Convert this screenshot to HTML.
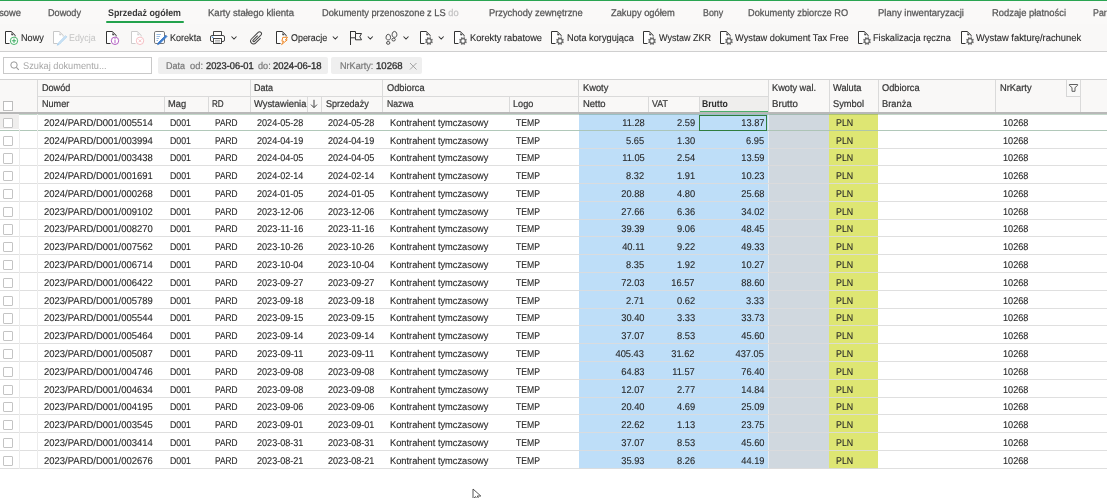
<!DOCTYPE html>
<html><head><meta charset="utf-8"><style>
html,body{margin:0;padding:0;}
body{width:1107px;height:498px;overflow:hidden;position:relative;background:#fff;font-family:"Liberation Sans", sans-serif;}
.t{position:absolute;white-space:nowrap;line-height:1;text-rendering:geometricPrecision;}
body{will-change:transform;}
</style></head><body>
<div style="position:absolute;left:0px;top:1.2px;width:1107px;height:22.8px;background:#faf9f8"></div>
<div style="position:absolute;left:0px;top:23.6px;width:1107px;height:0.8px;background:#f0f0ef"></div>
<div style="position:absolute;left:0px;top:0px;width:1107px;height:1.3px;background:#2aa552"></div>
<div class="t" style="right:1086.00px;top:8.50px;font-size:9.80px;color:#555555;transform:scaleX(0.9500);transform-origin:right;-webkit-text-stroke:0.25px #555;">sowe</div>
<div class="t" style="left:48.00px;top:8.50px;font-size:9.80px;color:#555555;transform:scaleX(0.9317);transform-origin:left;-webkit-text-stroke:0.25px #555;">Dowody</div>
<div class="t" style="left:108.00px;top:8.50px;font-size:9.80px;color:#3a3a3a;font-weight:700;transform:scaleX(0.9057);transform-origin:left;">Sprzedaż ogółem</div>
<div class="t" style="left:207.50px;top:8.50px;font-size:9.80px;color:#555555;transform:scaleX(0.9755);transform-origin:left;-webkit-text-stroke:0.25px #555;">Karty stałego klienta</div>
<div class="t" style="left:321.70px;top:8.50px;font-size:9.80px;color:#555555;transform:scaleX(0.9462);transform-origin:left;-webkit-text-stroke:0.25px #555;">Dokumenty przenoszone z LS <span style='color:#c4c4c4;-webkit-text-stroke:0.25px #c4c4c4'>do</span></div>
<div class="t" style="left:488.60px;top:8.50px;font-size:9.80px;color:#555555;transform:scaleX(0.9503);transform-origin:left;-webkit-text-stroke:0.25px #555;">Przychody zewnętrzne</div>
<div class="t" style="left:610.60px;top:8.50px;font-size:9.80px;color:#555555;transform:scaleX(0.9506);transform-origin:left;-webkit-text-stroke:0.25px #555;">Zakupy ogółem</div>
<div class="t" style="left:702.90px;top:8.50px;font-size:9.80px;color:#555555;transform:scaleX(0.9042);transform-origin:left;-webkit-text-stroke:0.25px #555;">Bony</div>
<div class="t" style="left:748.40px;top:8.50px;font-size:9.80px;color:#555555;transform:scaleX(0.9425);transform-origin:left;-webkit-text-stroke:0.25px #555;">Dokumenty zbiorcze RO</div>
<div class="t" style="left:878.00px;top:8.50px;font-size:9.80px;color:#555555;transform:scaleX(0.9685);transform-origin:left;-webkit-text-stroke:0.25px #555;">Plany inwentaryzacji</div>
<div class="t" style="left:992.00px;top:8.50px;font-size:9.80px;color:#555555;transform:scaleX(0.9566);transform-origin:left;-webkit-text-stroke:0.25px #555;">Rodzaje płatności</div>
<div class="t" style="left:1092.80px;top:8.50px;font-size:9.80px;color:#555555;transform:scaleX(0.9000);transform-origin:left;-webkit-text-stroke:0.25px #555;">Par<span style='opacity:.3'>a</span></div>
<div style="position:absolute;left:106px;top:21px;width:77.6px;height:2.4px;background:#22a24c;border-radius:1px"></div>
<div style="position:absolute;left:0px;top:24.4px;width:1107px;height:26.5px;background:#f9f8f7"></div>
<div style="position:absolute;left:0px;top:50.6px;width:1107px;height:1.2px;background:#cfcfcf"></div>
<div class="t" style="left:20.60px;top:34.10px;font-size:9.80px;color:#2b2b2b;transform:scaleX(0.9300);transform-origin:left;-webkit-text-stroke:0.12px #2b2b2b;">Nowy</div>
<div class="t" style="left:69.40px;top:34.10px;font-size:9.80px;color:#c4c4c4;transform:scaleX(0.9043);transform-origin:left;">Edycja</div>
<div class="t" style="left:169.80px;top:34.10px;font-size:9.80px;color:#2b2b2b;transform:scaleX(0.9236);transform-origin:left;-webkit-text-stroke:0.12px #2b2b2b;">Korekta</div>
<div class="t" style="left:291.30px;top:34.10px;font-size:9.80px;color:#2b2b2b;transform:scaleX(0.9103);transform-origin:left;-webkit-text-stroke:0.12px #2b2b2b;">Operacje</div>
<div class="t" style="left:470.00px;top:34.10px;font-size:9.80px;color:#2b2b2b;transform:scaleX(0.9440);transform-origin:left;-webkit-text-stroke:0.12px #2b2b2b;">Korekty rabatowe</div>
<div class="t" style="left:566.60px;top:34.10px;font-size:9.80px;color:#2b2b2b;transform:scaleX(0.9432);transform-origin:left;-webkit-text-stroke:0.12px #2b2b2b;">Nota korygująca</div>
<div class="t" style="left:658.50px;top:34.10px;font-size:9.80px;color:#2b2b2b;transform:scaleX(0.9196);transform-origin:left;-webkit-text-stroke:0.12px #2b2b2b;">Wystaw ZKR</div>
<div class="t" style="left:735.00px;top:34.10px;font-size:9.80px;color:#2b2b2b;transform:scaleX(0.9432);transform-origin:left;-webkit-text-stroke:0.12px #2b2b2b;">Wystaw dokument Tax Free</div>
<div class="t" style="left:873.20px;top:34.10px;font-size:9.80px;color:#2b2b2b;transform:scaleX(0.9397);transform-origin:left;-webkit-text-stroke:0.12px #2b2b2b;">Fiskalizacja ręczna</div>
<div class="t" style="left:976.00px;top:34.10px;font-size:9.80px;color:#2b2b2b;transform:scaleX(0.9569);transform-origin:left;-webkit-text-stroke:0.12px #2b2b2b;">Wystaw fakturę/rachunek</div>
<svg style="position:absolute;left:0;top:0" width="1107" height="55" viewBox="0 0 1107 55"><path d="M5.5 31.5 V43.5 H9.5" stroke="#333" fill="none"/><path d="M5.5 31.5 H11 L15 35.5 V36.5" stroke="#333" stroke-width="1.15" fill="none"/><path d="M6 32 H11 L14.5 35.5 V43 H6 Z" fill="#fff" stroke="none"/><path d="M11.6 33.6 V35.1 H13.1 Z" fill="#333" stroke="#333" stroke-width="0.5"/><circle cx="14" cy="40.8" r="3.7" fill="#fff" stroke="#2aa552" stroke-width="0.85"/><path d="M14 38.6 V43 M11.8 40.8 H16.2" stroke="#2aa552" stroke-width="0.9"/><path d="M53.5 31.5 V43.5 H57.5" stroke="#c8c8c8" fill="none"/><path d="M53.5 31.5 H59 L63 35.5 V36.5" stroke="#c8c8c8" stroke-width="1.15" fill="none"/><path d="M54 32 H59 L62.5 35.5 V43 H54 Z" fill="#fff" stroke="none"/><path d="M59.6 33.6 V35.1 H61.1 Z" fill="#c8c8c8" stroke="#c8c8c8" stroke-width="0.5"/><path d="M65.6 35.8 L58.2 43.2 L57.3 45.2 L59.3 44.3 L66.7 36.9 Z" fill="#d6e9f8" stroke="#a6cdec" stroke-width="0.9"/><path d="M106.5 31.5 V43.5 H110.5" stroke="#333" fill="none"/><path d="M106.5 31.5 H112 L116 35.5 V36.5" stroke="#333" stroke-width="1.15" fill="none"/><path d="M107 32 H112 L115.5 35.5 V43 H107 Z" fill="#fff" stroke="none"/><path d="M112.6 33.6 V35.1 H114.1 Z" fill="#333" stroke="#333" stroke-width="0.5"/><circle cx="115" cy="40.8" r="3.7" fill="#fff" stroke="#a546b8" stroke-width="0.85"/><path d="M115 39.6 V43.2" stroke="#a546b8" stroke-width="0.85"/><circle cx="115" cy="38.4" r="0.5" fill="#a546b8"/><path d="M131.5 31.5 V43.5 H135.5" stroke="#cccccc" fill="none"/><path d="M131.5 31.5 H137 L141 35.5 V36.5" stroke="#cccccc" stroke-width="1.15" fill="none"/><path d="M132 32 H137 L140.5 35.5 V43 H132 Z" fill="#fff" stroke="none"/><path d="M137.6 33.6 V35.1 H139.1 Z" fill="#cccccc" stroke="#cccccc" stroke-width="0.5"/><circle cx="140" cy="40.8" r="3.7" fill="#fff" stroke="#f4b3b9" stroke-width="0.85"/><path d="M138.6 39.4 L141.4 42.2 M141.4 39.4 L138.6 42.2" stroke="#f4b3b9" stroke-width="0.8"/><rect x="154.5" y="31.5" width="10" height="12" rx="1.3" stroke="#777" fill="#fff"/><path d="M156.5 34.5 H161 M156.5 36.5 H160 M156.5 38.5 H159 M156.5 40.5 H158" stroke="#8fb3de" stroke-width="0.9"/><path d="M167 36.4 L159.6 43.8 L157.6 44.6 L158.4 42.6 L165.8 35.2 Z" fill="#3d7ccb" stroke="#3d7ccb" stroke-width="0.9" stroke-linejoin="round"/><path d="M213.5 35.5 V31.5 H221.5 V35.5" stroke="#3a3a3a" stroke-width="0.95" fill="none"/><rect x="210.5" y="35.5" width="14" height="6" rx="1.5" stroke="#3a3a3a" stroke-width="0.95" fill="#fff"/><rect x="213.5" y="38.5" width="8" height="5" stroke="#3a3a3a" stroke-width="0.95" fill="#fff"/><path d="M215 40.3 H220 M215 42 H220" stroke="#8a8a8a" stroke-width="0.8"/><circle cx="212.7" cy="37.2" r="0.8" fill="#3c8ad8"/><path d="M231.5 36.5 L234 39.0 L236.5 36.5" stroke="#333" stroke-width="1.05" fill="none"/><g transform="translate(256.8 37.8) rotate(45)"><path d="M1.9 -2.5 V4.6 A2.9 2.9 0 0 1 -3.9 4.6 V-4.8 A1.95 1.95 0 0 1 0 -4.8 V4.2 A0.95 0.95 0 0 1 -1.9 4.2 V-2.2" stroke="#444" stroke-width="1" fill="none" transform="translate(1 0)"/></g><path d="M276.5 31.5 V43.5 H280.5" stroke="#333" fill="none"/><path d="M276.5 31.5 H282 L286 35.5 V36.5" stroke="#333" stroke-width="1.15" fill="none"/><path d="M277 32 H282 L285.5 35.5 V43 H277 Z" fill="#fff" stroke="none"/><path d="M282.6 33.6 V35.1 H284.1 Z" fill="#333" stroke="#333" stroke-width="0.5"/><path d="M282.8 37.3 H287.6 L285.4 39.9 H287.2 L281.6 44.6 L283.6 41.2 H281.9 Z" fill="#fff" stroke="#ef8a2a" stroke-width="1" stroke-linejoin="round"/><path d="M332.8 36.5 L335.3 39.0 L337.8 36.5" stroke="#333" stroke-width="1.05" fill="none"/><path d="M350.5 31 V45" stroke="#333" fill="none"/><path d="M350.5 31.5 H355.5 V33.5 H361.5 L359.8 36.7 L361.5 39.8 H355.5 V37.8 H350.5" stroke="#333" fill="none"/><path d="M355.5 33.5 V37.8" stroke="#333" fill="none"/><path d="M367.8 36.5 L370.3 39.0 L372.8 36.5" stroke="#333" stroke-width="1.05" fill="none"/><path d="M388.3 34.3 C390.3 34.3 390.9 37.2 390.4 38.6 C390.1 39.6 389.3 39.9 388.3 39.9 C387.3 39.9 386.5 39.6 386.2 38.6 C385.7 37.2 386.3 34.3 388.3 34.3 Z" stroke="#444" stroke-width="0.95" fill="none"/><ellipse cx="388.2" cy="42.9" rx="1.7" ry="1.4" stroke="#444" stroke-width="0.95" fill="none"/><path d="M394.5 31.4 C396.6 31.4 397.2 34.5 396.7 35.9 C396.4 36.9 395.6 37.3 394.5 37.3 C393.4 37.3 392.6 36.9 392.3 35.9 C391.8 34.5 392.4 31.4 394.5 31.4 Z" stroke="#444" stroke-width="0.95" fill="none"/><ellipse cx="393.6" cy="39.6" rx="1.7" ry="1.4" stroke="#444" stroke-width="0.95" fill="none"/><path d="M403.5 36.5 L406 39.0 L408.5 36.5" stroke="#333" stroke-width="1.05" fill="none"/><path d="M420.5 31.5 V43.5 H424.5" stroke="#333" fill="none"/><path d="M420.5 31.5 H426 L430 35.5 V36.5" stroke="#333" stroke-width="1.15" fill="none"/><path d="M421 32 H426 L429.5 35.5 V43 H421 Z" fill="#fff" stroke="none"/><path d="M426.6 33.6 V35.1 H428.1 Z" fill="#333" stroke="#333" stroke-width="0.5"/><circle cx="429" cy="41" r="3.2" fill="#fff"/><path d="M431.22 41.92 L432.60 42.49 M429.92 43.22 L430.49 44.60 M428.08 43.22 L427.51 44.60 M426.78 41.92 L425.40 42.49 M426.78 40.08 L425.40 39.51 M428.08 38.78 L427.51 37.40 M429.92 38.78 L430.49 37.40 M431.22 40.08 L432.60 39.51" stroke="#666" stroke-width="1.5"/><circle cx="429" cy="41" r="2.3" fill="#fff" stroke="#666" stroke-width="1.2"/><path d="M438.7 36.5 L441.2 39.0 L443.7 36.5" stroke="#333" stroke-width="1.05" fill="none"/><path d="M454.5 31.5 V43.5 H458.5" stroke="#333" fill="none"/><path d="M454.5 31.5 H460 L464 35.5 V36.5" stroke="#333" stroke-width="1.15" fill="none"/><path d="M455 32 H460 L463.5 35.5 V43 H455 Z" fill="#fff" stroke="none"/><path d="M460.6 33.6 V35.1 H462.1 Z" fill="#333" stroke="#333" stroke-width="0.5"/><circle cx="463" cy="41" r="3.2" fill="#fff"/><path d="M465.22 41.92 L466.60 42.49 M463.92 43.22 L464.49 44.60 M462.08 43.22 L461.51 44.60 M460.78 41.92 L459.40 42.49 M460.78 40.08 L459.40 39.51 M462.08 38.78 L461.51 37.40 M463.92 38.78 L464.49 37.40 M465.22 40.08 L466.60 39.51" stroke="#666" stroke-width="1.5"/><circle cx="463" cy="41" r="2.3" fill="#fff" stroke="#666" stroke-width="1.2"/><path d="M551.5 31.5 V43.5 H555.5" stroke="#333" fill="none"/><path d="M551.5 31.5 H557 L561 35.5 V36.5" stroke="#333" stroke-width="1.15" fill="none"/><path d="M552 32 H557 L560.5 35.5 V43 H552 Z" fill="#fff" stroke="none"/><path d="M557.6 33.6 V35.1 H559.1 Z" fill="#333" stroke="#333" stroke-width="0.5"/><circle cx="560" cy="41" r="3.2" fill="#fff"/><path d="M562.22 41.92 L563.60 42.49 M560.92 43.22 L561.49 44.60 M559.08 43.22 L558.51 44.60 M557.78 41.92 L556.40 42.49 M557.78 40.08 L556.40 39.51 M559.08 38.78 L558.51 37.40 M560.92 38.78 L561.49 37.40 M562.22 40.08 L563.60 39.51" stroke="#666" stroke-width="1.5"/><circle cx="560" cy="41" r="2.3" fill="#fff" stroke="#666" stroke-width="1.2"/><path d="M643.5 31.5 V43.5 H647.5" stroke="#333" fill="none"/><path d="M643.5 31.5 H649 L653 35.5 V36.5" stroke="#333" stroke-width="1.15" fill="none"/><path d="M644 32 H649 L652.5 35.5 V43 H644 Z" fill="#fff" stroke="none"/><path d="M649.6 33.6 V35.1 H651.1 Z" fill="#333" stroke="#333" stroke-width="0.5"/><circle cx="652" cy="41" r="3.2" fill="#fff"/><path d="M654.22 41.92 L655.60 42.49 M652.92 43.22 L653.49 44.60 M651.08 43.22 L650.51 44.60 M649.78 41.92 L648.40 42.49 M649.78 40.08 L648.40 39.51 M651.08 38.78 L650.51 37.40 M652.92 38.78 L653.49 37.40 M654.22 40.08 L655.60 39.51" stroke="#666" stroke-width="1.5"/><circle cx="652" cy="41" r="2.3" fill="#fff" stroke="#666" stroke-width="1.2"/><path d="M720.5 31.5 V43.5 H724.5" stroke="#333" fill="none"/><path d="M720.5 31.5 H726 L730 35.5 V36.5" stroke="#333" stroke-width="1.15" fill="none"/><path d="M721 32 H726 L729.5 35.5 V43 H721 Z" fill="#fff" stroke="none"/><path d="M726.6 33.6 V35.1 H728.1 Z" fill="#333" stroke="#333" stroke-width="0.5"/><circle cx="729" cy="41" r="3.2" fill="#fff"/><path d="M731.22 41.92 L732.60 42.49 M729.92 43.22 L730.49 44.60 M728.08 43.22 L727.51 44.60 M726.78 41.92 L725.40 42.49 M726.78 40.08 L725.40 39.51 M728.08 38.78 L727.51 37.40 M729.92 38.78 L730.49 37.40 M731.22 40.08 L732.60 39.51" stroke="#666" stroke-width="1.5"/><circle cx="729" cy="41" r="2.3" fill="#fff" stroke="#666" stroke-width="1.2"/><path d="M858.5 31.5 V43.5 H862.5" stroke="#333" fill="none"/><path d="M858.5 31.5 H864 L868 35.5 V36.5" stroke="#333" stroke-width="1.15" fill="none"/><path d="M859 32 H864 L867.5 35.5 V43 H859 Z" fill="#fff" stroke="none"/><path d="M864.6 33.6 V35.1 H866.1 Z" fill="#333" stroke="#333" stroke-width="0.5"/><circle cx="867" cy="41" r="3.2" fill="#fff"/><path d="M869.22 41.92 L870.60 42.49 M867.92 43.22 L868.49 44.60 M866.08 43.22 L865.51 44.60 M864.78 41.92 L863.40 42.49 M864.78 40.08 L863.40 39.51 M866.08 38.78 L865.51 37.40 M867.92 38.78 L868.49 37.40 M869.22 40.08 L870.60 39.51" stroke="#666" stroke-width="1.5"/><circle cx="867" cy="41" r="2.3" fill="#fff" stroke="#666" stroke-width="1.2"/><path d="M961.5 31.5 V43.5 H965.5" stroke="#333" fill="none"/><path d="M961.5 31.5 H967 L971 35.5 V36.5" stroke="#333" stroke-width="1.15" fill="none"/><path d="M962 32 H967 L970.5 35.5 V43 H962 Z" fill="#fff" stroke="none"/><path d="M967.6 33.6 V35.1 H969.1 Z" fill="#333" stroke="#333" stroke-width="0.5"/><circle cx="970" cy="41" r="3.2" fill="#fff"/><path d="M972.22 41.92 L973.60 42.49 M970.92 43.22 L971.49 44.60 M969.08 43.22 L968.51 44.60 M967.78 41.92 L966.40 42.49 M967.78 40.08 L966.40 39.51 M969.08 38.78 L968.51 37.40 M970.92 38.78 L971.49 37.40 M972.22 40.08 L973.60 39.51" stroke="#666" stroke-width="1.5"/><circle cx="970" cy="41" r="2.3" fill="#fff" stroke="#666" stroke-width="1.2"/></svg>
<div style="position:absolute;left:3.2px;top:57.2px;width:148.5px;height:16.4px;box-sizing:border-box;border:1px solid #c9c9c9;background:#fff"></div>
<svg style="position:absolute;left:10px;top:61px;overflow:visible" width="10" height="10" viewBox="0 0 10 10" fill="none"><circle cx="4" cy="4" r="3.2" stroke="#999" stroke-width="1"/><path d="M6.4 6.4 L8.8 8.8" stroke="#999" stroke-width="1.1"/></svg>
<div class="t" style="left:23.40px;top:61.50px;font-size:9.80px;color:#a8a8a8;transform:scaleX(0.9415);transform-origin:left;">Szukaj dokumentu...</div>
<div style="position:absolute;left:158.3px;top:57px;width:169.5px;height:16.5px;background:#efefef;border-radius:2px"></div>
<div class="t" style="left:166.40px;top:61.50px;font-size:9.80px;color:#777;transform:scaleX(0.9178);transform-origin:left;-webkit-text-stroke:0.2px #777;">Data</div>
<div class="t" style="left:190.00px;top:61.50px;font-size:9.80px;color:#777;transform:scaleX(0.9539);transform-origin:left;-webkit-text-stroke:0.2px #777;">od:</div>
<div class="t" style="left:205.60px;top:61.50px;font-size:9.80px;color:#333;transform:scaleX(0.9495);transform-origin:left;-webkit-text-stroke:0.35px #333;">2023-06-01</div>
<div class="t" style="left:258.20px;top:61.50px;font-size:9.80px;color:#777;transform:scaleX(0.9319);transform-origin:left;-webkit-text-stroke:0.2px #777;">do:</div>
<div class="t" style="left:273.40px;top:61.50px;font-size:9.80px;color:#333;transform:scaleX(0.9694);transform-origin:left;-webkit-text-stroke:0.35px #333;">2024-06-18</div>
<div style="position:absolute;left:331.3px;top:57px;width:90.6px;height:16.5px;background:#efefef;border-radius:2px"></div>
<div class="t" style="left:339.70px;top:61.50px;font-size:9.80px;color:#777;transform:scaleX(0.9266);transform-origin:left;-webkit-text-stroke:0.2px #777;">NrKarty:</div>
<div class="t" style="left:375.80px;top:61.50px;font-size:9.80px;color:#333;transform:scaleX(0.9759);transform-origin:left;-webkit-text-stroke:0.35px #333;">10268</div>
<svg style="position:absolute;left:408.5px;top:61.5px;overflow:visible" width="9" height="9" viewBox="0 0 9 9" fill="none"><path d="M1 1 L7.5 7.5 M7.5 1 L1 7.5" stroke="#999" stroke-width="0.9"/></svg>
<div style="position:absolute;left:0px;top:79px;width:1107px;height:33.5px;background:#f9f8f7"></div>
<div style="position:absolute;left:0px;top:78.6px;width:1107px;height:1.2px;background:#d2d2d2"></div>
<div style="position:absolute;left:37px;top:79.5px;width:1px;height:33px;background:#dadada"></div>
<div style="position:absolute;left:578px;top:79.5px;width:1px;height:33px;background:#dadada"></div>
<div style="position:absolute;left:768px;top:79.5px;width:1px;height:33px;background:#dadada"></div>
<div style="position:absolute;left:829px;top:79.5px;width:1px;height:33px;background:#dadada"></div>
<div style="position:absolute;left:878px;top:79.5px;width:1px;height:33px;background:#dadada"></div>
<div style="position:absolute;left:995px;top:79.5px;width:1px;height:33px;background:#dadada"></div>
<div style="position:absolute;left:1080px;top:79.5px;width:1px;height:33px;background:#dadada"></div>
<div style="position:absolute;left:164px;top:96.5px;width:1px;height:16px;background:#dadada"></div>
<div style="position:absolute;left:208px;top:96.5px;width:1px;height:16px;background:#dadada"></div>
<div style="position:absolute;left:307px;top:96.5px;width:1px;height:16px;background:#dadada"></div>
<div style="position:absolute;left:321px;top:96.5px;width:1px;height:16px;background:#dadada"></div>
<div style="position:absolute;left:509px;top:96.5px;width:1px;height:16px;background:#dadada"></div>
<div style="position:absolute;left:648px;top:96.5px;width:1px;height:16px;background:#dadada"></div>
<div style="position:absolute;left:699px;top:96.5px;width:1px;height:16px;background:#dadada"></div>
<div style="position:absolute;left:250px;top:79.5px;width:1px;height:33px;background:#dadada"></div>
<div style="position:absolute;left:382px;top:79.5px;width:1px;height:33px;background:#dadada"></div>
<div style="position:absolute;left:37px;top:96px;width:731.3px;height:1px;background:#dadada"></div>
<div style="position:absolute;left:699.8px;top:96.8px;width:68.5px;height:15.5px;background:#efeeed"></div>
<div style="position:absolute;left:699.8px;top:110.6px;width:68.5px;height:1.8px;background:#4caf6a"></div>
<div style="position:absolute;left:3.2px;top:101.3px;width:9.6px;height:9.6px;box-sizing:border-box;border:1px solid #bdbdbd;background:#fff"></div>
<div class="t" style="left:41.90px;top:84.20px;font-size:9.80px;color:#353535;transform:scaleX(0.9273);transform-origin:left;-webkit-text-stroke:0.22px #353535;">Dowód</div>
<div class="t" style="left:254.20px;top:84.20px;font-size:9.80px;color:#353535;transform:scaleX(0.9178);transform-origin:left;-webkit-text-stroke:0.22px #353535;">Data</div>
<div class="t" style="left:386.90px;top:84.20px;font-size:9.80px;color:#353535;transform:scaleX(0.9455);transform-origin:left;-webkit-text-stroke:0.22px #353535;">Odbiorca</div>
<div class="t" style="left:582.60px;top:84.20px;font-size:9.80px;color:#353535;transform:scaleX(0.9479);transform-origin:left;-webkit-text-stroke:0.22px #353535;">Kwoty</div>
<div class="t" style="left:772.20px;top:84.20px;font-size:9.80px;color:#353535;transform:scaleX(0.9393);transform-origin:left;-webkit-text-stroke:0.22px #353535;">Kwoty wal.</div>
<div class="t" style="left:833.00px;top:84.20px;font-size:9.80px;color:#353535;transform:scaleX(0.9453);transform-origin:left;-webkit-text-stroke:0.22px #353535;">Waluta</div>
<div class="t" style="left:881.70px;top:84.20px;font-size:9.80px;color:#353535;transform:scaleX(0.9455);transform-origin:left;-webkit-text-stroke:0.22px #353535;">Odbiorca</div>
<div class="t" style="left:999.70px;top:84.20px;font-size:9.80px;color:#353535;transform:scaleX(0.9510);transform-origin:left;-webkit-text-stroke:0.22px #353535;">NrKarty</div>
<div class="t" style="left:41.90px;top:100.20px;font-size:9.80px;color:#353535;transform:scaleX(0.9281);transform-origin:left;-webkit-text-stroke:0.22px #353535;">Numer</div>
<div class="t" style="left:167.60px;top:100.20px;font-size:9.80px;color:#353535;transform:scaleX(0.9494);transform-origin:left;-webkit-text-stroke:0.22px #353535;">Mag</div>
<div class="t" style="left:211.90px;top:100.20px;font-size:9.80px;color:#353535;transform:scaleX(0.8260);transform-origin:left;-webkit-text-stroke:0.22px #353535;">RD</div>
<div class="t" style="left:254.20px;top:100.20px;font-size:9.80px;color:#353535;transform:scaleX(0.9540);transform-origin:left;-webkit-text-stroke:0.22px #353535;">Wystawienia</div>
<svg style="position:absolute;left:310px;top:99px;overflow:visible" width="8" height="10" viewBox="0 0 8 10" fill="none"><path d="M4 0.8 V8.6 M1 5.6 L4 8.6 L7 5.6" stroke="#444" stroke-width="1"/></svg>
<div class="t" style="left:325.50px;top:100.20px;font-size:9.80px;color:#353535;transform:scaleX(0.9221);transform-origin:left;-webkit-text-stroke:0.22px #353535;">Sprzedaży</div>
<div class="t" style="left:386.90px;top:100.20px;font-size:9.80px;color:#353535;transform:scaleX(0.8843);transform-origin:left;-webkit-text-stroke:0.22px #353535;">Nazwa</div>
<div class="t" style="left:513.40px;top:100.20px;font-size:9.80px;color:#353535;transform:scaleX(0.9310);transform-origin:left;-webkit-text-stroke:0.22px #353535;">Logo</div>
<div class="t" style="left:582.60px;top:100.20px;font-size:9.80px;color:#353535;transform:scaleX(0.9647);transform-origin:left;-webkit-text-stroke:0.22px #353535;">Netto</div>
<div class="t" style="left:652.00px;top:100.20px;font-size:9.80px;color:#353535;transform:scaleX(0.9029);transform-origin:left;-webkit-text-stroke:0.22px #353535;">VAT</div>
<div class="t" style="left:702.30px;top:100.20px;font-size:9.80px;color:#2b2b2b;font-weight:700;transform:scaleX(0.8810);transform-origin:left;">Brutto</div>
<div class="t" style="left:772.20px;top:100.20px;font-size:9.80px;color:#353535;transform:scaleX(0.9903);transform-origin:left;-webkit-text-stroke:0.22px #353535;">Brutto</div>
<div class="t" style="left:833.00px;top:100.20px;font-size:9.80px;color:#353535;transform:scaleX(0.9482);transform-origin:left;-webkit-text-stroke:0.22px #353535;">Symbol</div>
<div class="t" style="left:881.70px;top:100.20px;font-size:9.80px;color:#353535;transform:scaleX(0.9532);transform-origin:left;-webkit-text-stroke:0.22px #353535;">Branża</div>
<div style="position:absolute;left:1066.3px;top:79.8px;width:14.2px;height:16.8px;box-sizing:border-box;border-left:1px solid #d6d6d6;border-bottom:1px solid #d6d6d6;background:#f9f9f8"></div>
<svg style="position:absolute;left:1066px;top:82px;overflow:visible" width="14" height="12" viewBox="0 0 14 12" fill="none"><path d="M3.4 2.5 H11.6 V3.4 L9 5.6 V9.3 H6 V5.6 L3.4 3.4 Z" stroke="#555" stroke-width="0.95" stroke-linejoin="round"/></svg>
<div style="position:absolute;left:578.9px;top:113.6px;width:189.4px;height:355.0200000000001px;background:#bedef8"></div>
<div style="position:absolute;left:768.3px;top:113.6px;width:1px;height:355.0200000000001px;background:#e6eaee"></div>
<div style="position:absolute;left:769.3px;top:113.6px;width:60.1px;height:355.0200000000001px;background:#d0d8df"></div>
<div style="position:absolute;left:829.4px;top:113.6px;width:48.8px;height:355.0200000000001px;background:#dee673"></div>
<div style="position:absolute;left:0px;top:112.4px;width:1107px;height:1.2px;background:#b8b8b8"></div>
<div style="position:absolute;left:0px;top:113.6px;width:1107px;height:1.1px;background:rgba(70,130,90,0.32)"></div>
<div style="position:absolute;left:0px;top:113.6px;width:19px;height:15.5px;background:#efeeed"></div>
<div style="position:absolute;left:0px;top:129.8px;width:1107px;height:1px;background:#a9c2b1;opacity:0.9"></div>
<div style="position:absolute;left:2.8px;top:117.8px;width:10.2px;height:10.2px;box-sizing:border-box;border:1px solid #c4c4c4;background:#fff;border-radius:1px"></div>
<div class="t" style="left:44.30px;top:118.80px;font-size:9.80px;color:#262626;transform:scaleX(0.9671);transform-origin:left;-webkit-text-stroke:0.1px #262626;">2024/PARD/D001/005514</div>
<div class="t" style="left:170.20px;top:118.80px;font-size:9.80px;color:#262626;transform:scaleX(0.8964);transform-origin:left;-webkit-text-stroke:0.1px #262626;">D001</div>
<div class="t" style="left:214.50px;top:118.80px;font-size:9.80px;color:#262626;transform:scaleX(0.8489);transform-origin:left;-webkit-text-stroke:0.1px #262626;">PARD</div>
<div class="t" style="left:256.90px;top:118.80px;font-size:9.80px;color:#262626;transform:scaleX(0.9255);transform-origin:left;-webkit-text-stroke:0.1px #262626;">2024-05-28</div>
<div class="t" style="left:327.90px;top:118.80px;font-size:9.80px;color:#262626;transform:scaleX(0.9255);transform-origin:left;-webkit-text-stroke:0.1px #262626;">2024-05-28</div>
<div class="t" style="left:390.00px;top:118.80px;font-size:9.80px;color:#262626;transform:scaleX(0.9457);transform-origin:left;-webkit-text-stroke:0.1px #262626;">Kontrahent tymczasowy</div>
<div class="t" style="left:515.90px;top:118.80px;font-size:9.80px;color:#262626;transform:scaleX(0.8815);transform-origin:left;-webkit-text-stroke:0.1px #262626;">TEMP</div>
<div class="t" style="right:462.60px;top:118.80px;font-size:9.80px;color:#262626;transform:scaleX(0.9500);transform-origin:right;-webkit-text-stroke:0.1px #262626;">11.28</div>
<div class="t" style="right:412.00px;top:118.80px;font-size:9.80px;color:#262626;transform:scaleX(0.9500);transform-origin:right;-webkit-text-stroke:0.1px #262626;">2.59</div>
<div class="t" style="right:342.80px;top:118.80px;font-size:9.80px;color:#262626;transform:scaleX(0.9500);transform-origin:right;-webkit-text-stroke:0.1px #262626;">13.87</div>
<div class="t" style="left:836.00px;top:118.80px;font-size:9.80px;color:#262626;transform:scaleX(0.9022);transform-origin:left;-webkit-text-stroke:0.1px #262626;">PLN</div>
<div class="t" style="left:1002.80px;top:118.80px;font-size:9.80px;color:#262626;transform:scaleX(0.9319);transform-origin:left;-webkit-text-stroke:0.1px #262626;">10268</div>
<div style="position:absolute;left:0px;top:147.58px;width:1107px;height:1px;background:#dcdcdc;opacity:0.9"></div>
<div style="position:absolute;left:2.8px;top:135.57999999999998px;width:10.2px;height:10.2px;box-sizing:border-box;border:1px solid #c4c4c4;background:#fff;border-radius:1px"></div>
<div class="t" style="left:44.30px;top:136.58px;font-size:9.80px;color:#262626;transform:scaleX(0.9671);transform-origin:left;-webkit-text-stroke:0.1px #262626;">2024/PARD/D001/003994</div>
<div class="t" style="left:170.20px;top:136.58px;font-size:9.80px;color:#262626;transform:scaleX(0.8964);transform-origin:left;-webkit-text-stroke:0.1px #262626;">D001</div>
<div class="t" style="left:214.50px;top:136.58px;font-size:9.80px;color:#262626;transform:scaleX(0.8489);transform-origin:left;-webkit-text-stroke:0.1px #262626;">PARD</div>
<div class="t" style="left:256.90px;top:136.58px;font-size:9.80px;color:#262626;transform:scaleX(0.9255);transform-origin:left;-webkit-text-stroke:0.1px #262626;">2024-04-19</div>
<div class="t" style="left:327.90px;top:136.58px;font-size:9.80px;color:#262626;transform:scaleX(0.9255);transform-origin:left;-webkit-text-stroke:0.1px #262626;">2024-04-19</div>
<div class="t" style="left:390.00px;top:136.58px;font-size:9.80px;color:#262626;transform:scaleX(0.9457);transform-origin:left;-webkit-text-stroke:0.1px #262626;">Kontrahent tymczasowy</div>
<div class="t" style="left:515.90px;top:136.58px;font-size:9.80px;color:#262626;transform:scaleX(0.8815);transform-origin:left;-webkit-text-stroke:0.1px #262626;">TEMP</div>
<div class="t" style="right:462.60px;top:136.58px;font-size:9.80px;color:#262626;transform:scaleX(0.9500);transform-origin:right;-webkit-text-stroke:0.1px #262626;">5.65</div>
<div class="t" style="right:412.00px;top:136.58px;font-size:9.80px;color:#262626;transform:scaleX(0.9500);transform-origin:right;-webkit-text-stroke:0.1px #262626;">1.30</div>
<div class="t" style="right:342.80px;top:136.58px;font-size:9.80px;color:#262626;transform:scaleX(0.9500);transform-origin:right;-webkit-text-stroke:0.1px #262626;">6.95</div>
<div class="t" style="left:836.00px;top:136.58px;font-size:9.80px;color:#262626;transform:scaleX(0.9022);transform-origin:left;-webkit-text-stroke:0.1px #262626;">PLN</div>
<div class="t" style="left:1002.80px;top:136.58px;font-size:9.80px;color:#262626;transform:scaleX(0.9319);transform-origin:left;-webkit-text-stroke:0.1px #262626;">10268</div>
<div style="position:absolute;left:0px;top:165.36px;width:1107px;height:1px;background:#dcdcdc;opacity:0.9"></div>
<div style="position:absolute;left:2.8px;top:153.36px;width:10.2px;height:10.2px;box-sizing:border-box;border:1px solid #c4c4c4;background:#fff;border-radius:1px"></div>
<div class="t" style="left:44.30px;top:154.36px;font-size:9.80px;color:#262626;transform:scaleX(0.9671);transform-origin:left;-webkit-text-stroke:0.1px #262626;">2024/PARD/D001/003438</div>
<div class="t" style="left:170.20px;top:154.36px;font-size:9.80px;color:#262626;transform:scaleX(0.8964);transform-origin:left;-webkit-text-stroke:0.1px #262626;">D001</div>
<div class="t" style="left:214.50px;top:154.36px;font-size:9.80px;color:#262626;transform:scaleX(0.8489);transform-origin:left;-webkit-text-stroke:0.1px #262626;">PARD</div>
<div class="t" style="left:256.90px;top:154.36px;font-size:9.80px;color:#262626;transform:scaleX(0.9255);transform-origin:left;-webkit-text-stroke:0.1px #262626;">2024-04-05</div>
<div class="t" style="left:327.90px;top:154.36px;font-size:9.80px;color:#262626;transform:scaleX(0.9255);transform-origin:left;-webkit-text-stroke:0.1px #262626;">2024-04-05</div>
<div class="t" style="left:390.00px;top:154.36px;font-size:9.80px;color:#262626;transform:scaleX(0.9457);transform-origin:left;-webkit-text-stroke:0.1px #262626;">Kontrahent tymczasowy</div>
<div class="t" style="left:515.90px;top:154.36px;font-size:9.80px;color:#262626;transform:scaleX(0.8815);transform-origin:left;-webkit-text-stroke:0.1px #262626;">TEMP</div>
<div class="t" style="right:462.60px;top:154.36px;font-size:9.80px;color:#262626;transform:scaleX(0.9500);transform-origin:right;-webkit-text-stroke:0.1px #262626;">11.05</div>
<div class="t" style="right:412.00px;top:154.36px;font-size:9.80px;color:#262626;transform:scaleX(0.9500);transform-origin:right;-webkit-text-stroke:0.1px #262626;">2.54</div>
<div class="t" style="right:342.80px;top:154.36px;font-size:9.80px;color:#262626;transform:scaleX(0.9500);transform-origin:right;-webkit-text-stroke:0.1px #262626;">13.59</div>
<div class="t" style="left:836.00px;top:154.36px;font-size:9.80px;color:#262626;transform:scaleX(0.9022);transform-origin:left;-webkit-text-stroke:0.1px #262626;">PLN</div>
<div class="t" style="left:1002.80px;top:154.36px;font-size:9.80px;color:#262626;transform:scaleX(0.9319);transform-origin:left;-webkit-text-stroke:0.1px #262626;">10268</div>
<div style="position:absolute;left:0px;top:183.14000000000001px;width:1107px;height:1px;background:#dcdcdc;opacity:0.9"></div>
<div style="position:absolute;left:2.8px;top:171.14px;width:10.2px;height:10.2px;box-sizing:border-box;border:1px solid #c4c4c4;background:#fff;border-radius:1px"></div>
<div class="t" style="left:44.30px;top:172.14px;font-size:9.80px;color:#262626;transform:scaleX(0.9671);transform-origin:left;-webkit-text-stroke:0.1px #262626;">2024/PARD/D001/001691</div>
<div class="t" style="left:170.20px;top:172.14px;font-size:9.80px;color:#262626;transform:scaleX(0.8964);transform-origin:left;-webkit-text-stroke:0.1px #262626;">D001</div>
<div class="t" style="left:214.50px;top:172.14px;font-size:9.80px;color:#262626;transform:scaleX(0.8489);transform-origin:left;-webkit-text-stroke:0.1px #262626;">PARD</div>
<div class="t" style="left:256.90px;top:172.14px;font-size:9.80px;color:#262626;transform:scaleX(0.9255);transform-origin:left;-webkit-text-stroke:0.1px #262626;">2024-02-14</div>
<div class="t" style="left:327.90px;top:172.14px;font-size:9.80px;color:#262626;transform:scaleX(0.9255);transform-origin:left;-webkit-text-stroke:0.1px #262626;">2024-02-14</div>
<div class="t" style="left:390.00px;top:172.14px;font-size:9.80px;color:#262626;transform:scaleX(0.9457);transform-origin:left;-webkit-text-stroke:0.1px #262626;">Kontrahent tymczasowy</div>
<div class="t" style="left:515.90px;top:172.14px;font-size:9.80px;color:#262626;transform:scaleX(0.8815);transform-origin:left;-webkit-text-stroke:0.1px #262626;">TEMP</div>
<div class="t" style="right:462.60px;top:172.14px;font-size:9.80px;color:#262626;transform:scaleX(0.9500);transform-origin:right;-webkit-text-stroke:0.1px #262626;">8.32</div>
<div class="t" style="right:412.00px;top:172.14px;font-size:9.80px;color:#262626;transform:scaleX(0.9500);transform-origin:right;-webkit-text-stroke:0.1px #262626;">1.91</div>
<div class="t" style="right:342.80px;top:172.14px;font-size:9.80px;color:#262626;transform:scaleX(0.9500);transform-origin:right;-webkit-text-stroke:0.1px #262626;">10.23</div>
<div class="t" style="left:836.00px;top:172.14px;font-size:9.80px;color:#262626;transform:scaleX(0.9022);transform-origin:left;-webkit-text-stroke:0.1px #262626;">PLN</div>
<div class="t" style="left:1002.80px;top:172.14px;font-size:9.80px;color:#262626;transform:scaleX(0.9319);transform-origin:left;-webkit-text-stroke:0.1px #262626;">10268</div>
<div style="position:absolute;left:0px;top:200.92000000000002px;width:1107px;height:1px;background:#dcdcdc;opacity:0.9"></div>
<div style="position:absolute;left:2.8px;top:188.92000000000002px;width:10.2px;height:10.2px;box-sizing:border-box;border:1px solid #c4c4c4;background:#fff;border-radius:1px"></div>
<div class="t" style="left:44.30px;top:189.92px;font-size:9.80px;color:#262626;transform:scaleX(0.9671);transform-origin:left;-webkit-text-stroke:0.1px #262626;">2024/PARD/D001/000268</div>
<div class="t" style="left:170.20px;top:189.92px;font-size:9.80px;color:#262626;transform:scaleX(0.8964);transform-origin:left;-webkit-text-stroke:0.1px #262626;">D001</div>
<div class="t" style="left:214.50px;top:189.92px;font-size:9.80px;color:#262626;transform:scaleX(0.8489);transform-origin:left;-webkit-text-stroke:0.1px #262626;">PARD</div>
<div class="t" style="left:256.90px;top:189.92px;font-size:9.80px;color:#262626;transform:scaleX(0.9255);transform-origin:left;-webkit-text-stroke:0.1px #262626;">2024-01-05</div>
<div class="t" style="left:327.90px;top:189.92px;font-size:9.80px;color:#262626;transform:scaleX(0.9255);transform-origin:left;-webkit-text-stroke:0.1px #262626;">2024-01-05</div>
<div class="t" style="left:390.00px;top:189.92px;font-size:9.80px;color:#262626;transform:scaleX(0.9457);transform-origin:left;-webkit-text-stroke:0.1px #262626;">Kontrahent tymczasowy</div>
<div class="t" style="left:515.90px;top:189.92px;font-size:9.80px;color:#262626;transform:scaleX(0.8815);transform-origin:left;-webkit-text-stroke:0.1px #262626;">TEMP</div>
<div class="t" style="right:462.60px;top:189.92px;font-size:9.80px;color:#262626;transform:scaleX(0.9500);transform-origin:right;-webkit-text-stroke:0.1px #262626;">20.88</div>
<div class="t" style="right:412.00px;top:189.92px;font-size:9.80px;color:#262626;transform:scaleX(0.9500);transform-origin:right;-webkit-text-stroke:0.1px #262626;">4.80</div>
<div class="t" style="right:342.80px;top:189.92px;font-size:9.80px;color:#262626;transform:scaleX(0.9500);transform-origin:right;-webkit-text-stroke:0.1px #262626;">25.68</div>
<div class="t" style="left:836.00px;top:189.92px;font-size:9.80px;color:#262626;transform:scaleX(0.9022);transform-origin:left;-webkit-text-stroke:0.1px #262626;">PLN</div>
<div class="t" style="left:1002.80px;top:189.92px;font-size:9.80px;color:#262626;transform:scaleX(0.9319);transform-origin:left;-webkit-text-stroke:0.1px #262626;">10268</div>
<div style="position:absolute;left:0px;top:218.70000000000002px;width:1107px;height:1px;background:#dcdcdc;opacity:0.9"></div>
<div style="position:absolute;left:2.8px;top:206.7px;width:10.2px;height:10.2px;box-sizing:border-box;border:1px solid #c4c4c4;background:#fff;border-radius:1px"></div>
<div class="t" style="left:44.30px;top:207.70px;font-size:9.80px;color:#262626;transform:scaleX(0.9671);transform-origin:left;-webkit-text-stroke:0.1px #262626;">2023/PARD/D001/009102</div>
<div class="t" style="left:170.20px;top:207.70px;font-size:9.80px;color:#262626;transform:scaleX(0.8964);transform-origin:left;-webkit-text-stroke:0.1px #262626;">D001</div>
<div class="t" style="left:214.50px;top:207.70px;font-size:9.80px;color:#262626;transform:scaleX(0.8489);transform-origin:left;-webkit-text-stroke:0.1px #262626;">PARD</div>
<div class="t" style="left:256.90px;top:207.70px;font-size:9.80px;color:#262626;transform:scaleX(0.9255);transform-origin:left;-webkit-text-stroke:0.1px #262626;">2023-12-06</div>
<div class="t" style="left:327.90px;top:207.70px;font-size:9.80px;color:#262626;transform:scaleX(0.9255);transform-origin:left;-webkit-text-stroke:0.1px #262626;">2023-12-06</div>
<div class="t" style="left:390.00px;top:207.70px;font-size:9.80px;color:#262626;transform:scaleX(0.9457);transform-origin:left;-webkit-text-stroke:0.1px #262626;">Kontrahent tymczasowy</div>
<div class="t" style="left:515.90px;top:207.70px;font-size:9.80px;color:#262626;transform:scaleX(0.8815);transform-origin:left;-webkit-text-stroke:0.1px #262626;">TEMP</div>
<div class="t" style="right:462.60px;top:207.70px;font-size:9.80px;color:#262626;transform:scaleX(0.9500);transform-origin:right;-webkit-text-stroke:0.1px #262626;">27.66</div>
<div class="t" style="right:412.00px;top:207.70px;font-size:9.80px;color:#262626;transform:scaleX(0.9500);transform-origin:right;-webkit-text-stroke:0.1px #262626;">6.36</div>
<div class="t" style="right:342.80px;top:207.70px;font-size:9.80px;color:#262626;transform:scaleX(0.9500);transform-origin:right;-webkit-text-stroke:0.1px #262626;">34.02</div>
<div class="t" style="left:836.00px;top:207.70px;font-size:9.80px;color:#262626;transform:scaleX(0.9022);transform-origin:left;-webkit-text-stroke:0.1px #262626;">PLN</div>
<div class="t" style="left:1002.80px;top:207.70px;font-size:9.80px;color:#262626;transform:scaleX(0.9319);transform-origin:left;-webkit-text-stroke:0.1px #262626;">10268</div>
<div style="position:absolute;left:0px;top:236.48000000000002px;width:1107px;height:1px;background:#dcdcdc;opacity:0.9"></div>
<div style="position:absolute;left:2.8px;top:224.48000000000002px;width:10.2px;height:10.2px;box-sizing:border-box;border:1px solid #c4c4c4;background:#fff;border-radius:1px"></div>
<div class="t" style="left:44.30px;top:225.48px;font-size:9.80px;color:#262626;transform:scaleX(0.9671);transform-origin:left;-webkit-text-stroke:0.1px #262626;">2023/PARD/D001/008270</div>
<div class="t" style="left:170.20px;top:225.48px;font-size:9.80px;color:#262626;transform:scaleX(0.8964);transform-origin:left;-webkit-text-stroke:0.1px #262626;">D001</div>
<div class="t" style="left:214.50px;top:225.48px;font-size:9.80px;color:#262626;transform:scaleX(0.8489);transform-origin:left;-webkit-text-stroke:0.1px #262626;">PARD</div>
<div class="t" style="left:256.90px;top:225.48px;font-size:9.80px;color:#262626;transform:scaleX(0.9390);transform-origin:left;-webkit-text-stroke:0.1px #262626;">2023-11-16</div>
<div class="t" style="left:327.90px;top:225.48px;font-size:9.80px;color:#262626;transform:scaleX(0.9390);transform-origin:left;-webkit-text-stroke:0.1px #262626;">2023-11-16</div>
<div class="t" style="left:390.00px;top:225.48px;font-size:9.80px;color:#262626;transform:scaleX(0.9457);transform-origin:left;-webkit-text-stroke:0.1px #262626;">Kontrahent tymczasowy</div>
<div class="t" style="left:515.90px;top:225.48px;font-size:9.80px;color:#262626;transform:scaleX(0.8815);transform-origin:left;-webkit-text-stroke:0.1px #262626;">TEMP</div>
<div class="t" style="right:462.60px;top:225.48px;font-size:9.80px;color:#262626;transform:scaleX(0.9500);transform-origin:right;-webkit-text-stroke:0.1px #262626;">39.39</div>
<div class="t" style="right:412.00px;top:225.48px;font-size:9.80px;color:#262626;transform:scaleX(0.9500);transform-origin:right;-webkit-text-stroke:0.1px #262626;">9.06</div>
<div class="t" style="right:342.80px;top:225.48px;font-size:9.80px;color:#262626;transform:scaleX(0.9500);transform-origin:right;-webkit-text-stroke:0.1px #262626;">48.45</div>
<div class="t" style="left:836.00px;top:225.48px;font-size:9.80px;color:#262626;transform:scaleX(0.9022);transform-origin:left;-webkit-text-stroke:0.1px #262626;">PLN</div>
<div class="t" style="left:1002.80px;top:225.48px;font-size:9.80px;color:#262626;transform:scaleX(0.9319);transform-origin:left;-webkit-text-stroke:0.1px #262626;">10268</div>
<div style="position:absolute;left:0px;top:254.26000000000002px;width:1107px;height:1px;background:#dcdcdc;opacity:0.9"></div>
<div style="position:absolute;left:2.8px;top:242.26px;width:10.2px;height:10.2px;box-sizing:border-box;border:1px solid #c4c4c4;background:#fff;border-radius:1px"></div>
<div class="t" style="left:44.30px;top:243.26px;font-size:9.80px;color:#262626;transform:scaleX(0.9671);transform-origin:left;-webkit-text-stroke:0.1px #262626;">2023/PARD/D001/007562</div>
<div class="t" style="left:170.20px;top:243.26px;font-size:9.80px;color:#262626;transform:scaleX(0.8964);transform-origin:left;-webkit-text-stroke:0.1px #262626;">D001</div>
<div class="t" style="left:214.50px;top:243.26px;font-size:9.80px;color:#262626;transform:scaleX(0.8489);transform-origin:left;-webkit-text-stroke:0.1px #262626;">PARD</div>
<div class="t" style="left:256.90px;top:243.26px;font-size:9.80px;color:#262626;transform:scaleX(0.9255);transform-origin:left;-webkit-text-stroke:0.1px #262626;">2023-10-26</div>
<div class="t" style="left:327.90px;top:243.26px;font-size:9.80px;color:#262626;transform:scaleX(0.9255);transform-origin:left;-webkit-text-stroke:0.1px #262626;">2023-10-26</div>
<div class="t" style="left:390.00px;top:243.26px;font-size:9.80px;color:#262626;transform:scaleX(0.9457);transform-origin:left;-webkit-text-stroke:0.1px #262626;">Kontrahent tymczasowy</div>
<div class="t" style="left:515.90px;top:243.26px;font-size:9.80px;color:#262626;transform:scaleX(0.8815);transform-origin:left;-webkit-text-stroke:0.1px #262626;">TEMP</div>
<div class="t" style="right:462.60px;top:243.26px;font-size:9.80px;color:#262626;transform:scaleX(0.9500);transform-origin:right;-webkit-text-stroke:0.1px #262626;">40.11</div>
<div class="t" style="right:412.00px;top:243.26px;font-size:9.80px;color:#262626;transform:scaleX(0.9500);transform-origin:right;-webkit-text-stroke:0.1px #262626;">9.22</div>
<div class="t" style="right:342.80px;top:243.26px;font-size:9.80px;color:#262626;transform:scaleX(0.9500);transform-origin:right;-webkit-text-stroke:0.1px #262626;">49.33</div>
<div class="t" style="left:836.00px;top:243.26px;font-size:9.80px;color:#262626;transform:scaleX(0.9022);transform-origin:left;-webkit-text-stroke:0.1px #262626;">PLN</div>
<div class="t" style="left:1002.80px;top:243.26px;font-size:9.80px;color:#262626;transform:scaleX(0.9319);transform-origin:left;-webkit-text-stroke:0.1px #262626;">10268</div>
<div style="position:absolute;left:0px;top:272.04px;width:1107px;height:1px;background:#dcdcdc;opacity:0.9"></div>
<div style="position:absolute;left:2.8px;top:260.04px;width:10.2px;height:10.2px;box-sizing:border-box;border:1px solid #c4c4c4;background:#fff;border-radius:1px"></div>
<div class="t" style="left:44.30px;top:261.04px;font-size:9.80px;color:#262626;transform:scaleX(0.9671);transform-origin:left;-webkit-text-stroke:0.1px #262626;">2023/PARD/D001/006714</div>
<div class="t" style="left:170.20px;top:261.04px;font-size:9.80px;color:#262626;transform:scaleX(0.8964);transform-origin:left;-webkit-text-stroke:0.1px #262626;">D001</div>
<div class="t" style="left:214.50px;top:261.04px;font-size:9.80px;color:#262626;transform:scaleX(0.8489);transform-origin:left;-webkit-text-stroke:0.1px #262626;">PARD</div>
<div class="t" style="left:256.90px;top:261.04px;font-size:9.80px;color:#262626;transform:scaleX(0.9255);transform-origin:left;-webkit-text-stroke:0.1px #262626;">2023-10-04</div>
<div class="t" style="left:327.90px;top:261.04px;font-size:9.80px;color:#262626;transform:scaleX(0.9255);transform-origin:left;-webkit-text-stroke:0.1px #262626;">2023-10-04</div>
<div class="t" style="left:390.00px;top:261.04px;font-size:9.80px;color:#262626;transform:scaleX(0.9457);transform-origin:left;-webkit-text-stroke:0.1px #262626;">Kontrahent tymczasowy</div>
<div class="t" style="left:515.90px;top:261.04px;font-size:9.80px;color:#262626;transform:scaleX(0.8815);transform-origin:left;-webkit-text-stroke:0.1px #262626;">TEMP</div>
<div class="t" style="right:462.60px;top:261.04px;font-size:9.80px;color:#262626;transform:scaleX(0.9500);transform-origin:right;-webkit-text-stroke:0.1px #262626;">8.35</div>
<div class="t" style="right:412.00px;top:261.04px;font-size:9.80px;color:#262626;transform:scaleX(0.9500);transform-origin:right;-webkit-text-stroke:0.1px #262626;">1.92</div>
<div class="t" style="right:342.80px;top:261.04px;font-size:9.80px;color:#262626;transform:scaleX(0.9500);transform-origin:right;-webkit-text-stroke:0.1px #262626;">10.27</div>
<div class="t" style="left:836.00px;top:261.04px;font-size:9.80px;color:#262626;transform:scaleX(0.9022);transform-origin:left;-webkit-text-stroke:0.1px #262626;">PLN</div>
<div class="t" style="left:1002.80px;top:261.04px;font-size:9.80px;color:#262626;transform:scaleX(0.9319);transform-origin:left;-webkit-text-stroke:0.1px #262626;">10268</div>
<div style="position:absolute;left:0px;top:289.82000000000005px;width:1107px;height:1px;background:#dcdcdc;opacity:0.9"></div>
<div style="position:absolute;left:2.8px;top:277.82px;width:10.2px;height:10.2px;box-sizing:border-box;border:1px solid #c4c4c4;background:#fff;border-radius:1px"></div>
<div class="t" style="left:44.30px;top:278.82px;font-size:9.80px;color:#262626;transform:scaleX(0.9671);transform-origin:left;-webkit-text-stroke:0.1px #262626;">2023/PARD/D001/006422</div>
<div class="t" style="left:170.20px;top:278.82px;font-size:9.80px;color:#262626;transform:scaleX(0.8964);transform-origin:left;-webkit-text-stroke:0.1px #262626;">D001</div>
<div class="t" style="left:214.50px;top:278.82px;font-size:9.80px;color:#262626;transform:scaleX(0.8489);transform-origin:left;-webkit-text-stroke:0.1px #262626;">PARD</div>
<div class="t" style="left:256.90px;top:278.82px;font-size:9.80px;color:#262626;transform:scaleX(0.9255);transform-origin:left;-webkit-text-stroke:0.1px #262626;">2023-09-27</div>
<div class="t" style="left:327.90px;top:278.82px;font-size:9.80px;color:#262626;transform:scaleX(0.9255);transform-origin:left;-webkit-text-stroke:0.1px #262626;">2023-09-27</div>
<div class="t" style="left:390.00px;top:278.82px;font-size:9.80px;color:#262626;transform:scaleX(0.9457);transform-origin:left;-webkit-text-stroke:0.1px #262626;">Kontrahent tymczasowy</div>
<div class="t" style="left:515.90px;top:278.82px;font-size:9.80px;color:#262626;transform:scaleX(0.8815);transform-origin:left;-webkit-text-stroke:0.1px #262626;">TEMP</div>
<div class="t" style="right:462.60px;top:278.82px;font-size:9.80px;color:#262626;transform:scaleX(0.9500);transform-origin:right;-webkit-text-stroke:0.1px #262626;">72.03</div>
<div class="t" style="right:412.00px;top:278.82px;font-size:9.80px;color:#262626;transform:scaleX(0.9500);transform-origin:right;-webkit-text-stroke:0.1px #262626;">16.57</div>
<div class="t" style="right:342.80px;top:278.82px;font-size:9.80px;color:#262626;transform:scaleX(0.9500);transform-origin:right;-webkit-text-stroke:0.1px #262626;">88.60</div>
<div class="t" style="left:836.00px;top:278.82px;font-size:9.80px;color:#262626;transform:scaleX(0.9022);transform-origin:left;-webkit-text-stroke:0.1px #262626;">PLN</div>
<div class="t" style="left:1002.80px;top:278.82px;font-size:9.80px;color:#262626;transform:scaleX(0.9319);transform-origin:left;-webkit-text-stroke:0.1px #262626;">10268</div>
<div style="position:absolute;left:0px;top:307.6px;width:1107px;height:1px;background:#dcdcdc;opacity:0.9"></div>
<div style="position:absolute;left:2.8px;top:295.6px;width:10.2px;height:10.2px;box-sizing:border-box;border:1px solid #c4c4c4;background:#fff;border-radius:1px"></div>
<div class="t" style="left:44.30px;top:296.60px;font-size:9.80px;color:#262626;transform:scaleX(0.9671);transform-origin:left;-webkit-text-stroke:0.1px #262626;">2023/PARD/D001/005789</div>
<div class="t" style="left:170.20px;top:296.60px;font-size:9.80px;color:#262626;transform:scaleX(0.8964);transform-origin:left;-webkit-text-stroke:0.1px #262626;">D001</div>
<div class="t" style="left:214.50px;top:296.60px;font-size:9.80px;color:#262626;transform:scaleX(0.8489);transform-origin:left;-webkit-text-stroke:0.1px #262626;">PARD</div>
<div class="t" style="left:256.90px;top:296.60px;font-size:9.80px;color:#262626;transform:scaleX(0.9255);transform-origin:left;-webkit-text-stroke:0.1px #262626;">2023-09-18</div>
<div class="t" style="left:327.90px;top:296.60px;font-size:9.80px;color:#262626;transform:scaleX(0.9255);transform-origin:left;-webkit-text-stroke:0.1px #262626;">2023-09-18</div>
<div class="t" style="left:390.00px;top:296.60px;font-size:9.80px;color:#262626;transform:scaleX(0.9457);transform-origin:left;-webkit-text-stroke:0.1px #262626;">Kontrahent tymczasowy</div>
<div class="t" style="left:515.90px;top:296.60px;font-size:9.80px;color:#262626;transform:scaleX(0.8815);transform-origin:left;-webkit-text-stroke:0.1px #262626;">TEMP</div>
<div class="t" style="right:462.60px;top:296.60px;font-size:9.80px;color:#262626;transform:scaleX(0.9500);transform-origin:right;-webkit-text-stroke:0.1px #262626;">2.71</div>
<div class="t" style="right:412.00px;top:296.60px;font-size:9.80px;color:#262626;transform:scaleX(0.9500);transform-origin:right;-webkit-text-stroke:0.1px #262626;">0.62</div>
<div class="t" style="right:342.80px;top:296.60px;font-size:9.80px;color:#262626;transform:scaleX(0.9500);transform-origin:right;-webkit-text-stroke:0.1px #262626;">3.33</div>
<div class="t" style="left:836.00px;top:296.60px;font-size:9.80px;color:#262626;transform:scaleX(0.9022);transform-origin:left;-webkit-text-stroke:0.1px #262626;">PLN</div>
<div class="t" style="left:1002.80px;top:296.60px;font-size:9.80px;color:#262626;transform:scaleX(0.9319);transform-origin:left;-webkit-text-stroke:0.1px #262626;">10268</div>
<div style="position:absolute;left:0px;top:325.38px;width:1107px;height:1px;background:#dcdcdc;opacity:0.9"></div>
<div style="position:absolute;left:2.8px;top:313.38px;width:10.2px;height:10.2px;box-sizing:border-box;border:1px solid #c4c4c4;background:#fff;border-radius:1px"></div>
<div class="t" style="left:44.30px;top:314.38px;font-size:9.80px;color:#262626;transform:scaleX(0.9671);transform-origin:left;-webkit-text-stroke:0.1px #262626;">2023/PARD/D001/005544</div>
<div class="t" style="left:170.20px;top:314.38px;font-size:9.80px;color:#262626;transform:scaleX(0.8964);transform-origin:left;-webkit-text-stroke:0.1px #262626;">D001</div>
<div class="t" style="left:214.50px;top:314.38px;font-size:9.80px;color:#262626;transform:scaleX(0.8489);transform-origin:left;-webkit-text-stroke:0.1px #262626;">PARD</div>
<div class="t" style="left:256.90px;top:314.38px;font-size:9.80px;color:#262626;transform:scaleX(0.9255);transform-origin:left;-webkit-text-stroke:0.1px #262626;">2023-09-15</div>
<div class="t" style="left:327.90px;top:314.38px;font-size:9.80px;color:#262626;transform:scaleX(0.9255);transform-origin:left;-webkit-text-stroke:0.1px #262626;">2023-09-15</div>
<div class="t" style="left:390.00px;top:314.38px;font-size:9.80px;color:#262626;transform:scaleX(0.9457);transform-origin:left;-webkit-text-stroke:0.1px #262626;">Kontrahent tymczasowy</div>
<div class="t" style="left:515.90px;top:314.38px;font-size:9.80px;color:#262626;transform:scaleX(0.8815);transform-origin:left;-webkit-text-stroke:0.1px #262626;">TEMP</div>
<div class="t" style="right:462.60px;top:314.38px;font-size:9.80px;color:#262626;transform:scaleX(0.9500);transform-origin:right;-webkit-text-stroke:0.1px #262626;">30.40</div>
<div class="t" style="right:412.00px;top:314.38px;font-size:9.80px;color:#262626;transform:scaleX(0.9500);transform-origin:right;-webkit-text-stroke:0.1px #262626;">3.33</div>
<div class="t" style="right:342.80px;top:314.38px;font-size:9.80px;color:#262626;transform:scaleX(0.9500);transform-origin:right;-webkit-text-stroke:0.1px #262626;">33.73</div>
<div class="t" style="left:836.00px;top:314.38px;font-size:9.80px;color:#262626;transform:scaleX(0.9022);transform-origin:left;-webkit-text-stroke:0.1px #262626;">PLN</div>
<div class="t" style="left:1002.80px;top:314.38px;font-size:9.80px;color:#262626;transform:scaleX(0.9319);transform-origin:left;-webkit-text-stroke:0.1px #262626;">10268</div>
<div style="position:absolute;left:0px;top:343.16px;width:1107px;height:1px;background:#dcdcdc;opacity:0.9"></div>
<div style="position:absolute;left:2.8px;top:331.16px;width:10.2px;height:10.2px;box-sizing:border-box;border:1px solid #c4c4c4;background:#fff;border-radius:1px"></div>
<div class="t" style="left:44.30px;top:332.16px;font-size:9.80px;color:#262626;transform:scaleX(0.9671);transform-origin:left;-webkit-text-stroke:0.1px #262626;">2023/PARD/D001/005464</div>
<div class="t" style="left:170.20px;top:332.16px;font-size:9.80px;color:#262626;transform:scaleX(0.8964);transform-origin:left;-webkit-text-stroke:0.1px #262626;">D001</div>
<div class="t" style="left:214.50px;top:332.16px;font-size:9.80px;color:#262626;transform:scaleX(0.8489);transform-origin:left;-webkit-text-stroke:0.1px #262626;">PARD</div>
<div class="t" style="left:256.90px;top:332.16px;font-size:9.80px;color:#262626;transform:scaleX(0.9255);transform-origin:left;-webkit-text-stroke:0.1px #262626;">2023-09-14</div>
<div class="t" style="left:327.90px;top:332.16px;font-size:9.80px;color:#262626;transform:scaleX(0.9255);transform-origin:left;-webkit-text-stroke:0.1px #262626;">2023-09-14</div>
<div class="t" style="left:390.00px;top:332.16px;font-size:9.80px;color:#262626;transform:scaleX(0.9457);transform-origin:left;-webkit-text-stroke:0.1px #262626;">Kontrahent tymczasowy</div>
<div class="t" style="left:515.90px;top:332.16px;font-size:9.80px;color:#262626;transform:scaleX(0.8815);transform-origin:left;-webkit-text-stroke:0.1px #262626;">TEMP</div>
<div class="t" style="right:462.60px;top:332.16px;font-size:9.80px;color:#262626;transform:scaleX(0.9500);transform-origin:right;-webkit-text-stroke:0.1px #262626;">37.07</div>
<div class="t" style="right:412.00px;top:332.16px;font-size:9.80px;color:#262626;transform:scaleX(0.9500);transform-origin:right;-webkit-text-stroke:0.1px #262626;">8.53</div>
<div class="t" style="right:342.80px;top:332.16px;font-size:9.80px;color:#262626;transform:scaleX(0.9500);transform-origin:right;-webkit-text-stroke:0.1px #262626;">45.60</div>
<div class="t" style="left:836.00px;top:332.16px;font-size:9.80px;color:#262626;transform:scaleX(0.9022);transform-origin:left;-webkit-text-stroke:0.1px #262626;">PLN</div>
<div class="t" style="left:1002.80px;top:332.16px;font-size:9.80px;color:#262626;transform:scaleX(0.9319);transform-origin:left;-webkit-text-stroke:0.1px #262626;">10268</div>
<div style="position:absolute;left:0px;top:360.94000000000005px;width:1107px;height:1px;background:#dcdcdc;opacity:0.9"></div>
<div style="position:absolute;left:2.8px;top:348.94px;width:10.2px;height:10.2px;box-sizing:border-box;border:1px solid #c4c4c4;background:#fff;border-radius:1px"></div>
<div class="t" style="left:44.30px;top:349.94px;font-size:9.80px;color:#262626;transform:scaleX(0.9671);transform-origin:left;-webkit-text-stroke:0.1px #262626;">2023/PARD/D001/005087</div>
<div class="t" style="left:170.20px;top:349.94px;font-size:9.80px;color:#262626;transform:scaleX(0.8964);transform-origin:left;-webkit-text-stroke:0.1px #262626;">D001</div>
<div class="t" style="left:214.50px;top:349.94px;font-size:9.80px;color:#262626;transform:scaleX(0.8489);transform-origin:left;-webkit-text-stroke:0.1px #262626;">PARD</div>
<div class="t" style="left:256.90px;top:349.94px;font-size:9.80px;color:#262626;transform:scaleX(0.9390);transform-origin:left;-webkit-text-stroke:0.1px #262626;">2023-09-11</div>
<div class="t" style="left:327.90px;top:349.94px;font-size:9.80px;color:#262626;transform:scaleX(0.9390);transform-origin:left;-webkit-text-stroke:0.1px #262626;">2023-09-11</div>
<div class="t" style="left:390.00px;top:349.94px;font-size:9.80px;color:#262626;transform:scaleX(0.9457);transform-origin:left;-webkit-text-stroke:0.1px #262626;">Kontrahent tymczasowy</div>
<div class="t" style="left:515.90px;top:349.94px;font-size:9.80px;color:#262626;transform:scaleX(0.8815);transform-origin:left;-webkit-text-stroke:0.1px #262626;">TEMP</div>
<div class="t" style="right:462.60px;top:349.94px;font-size:9.80px;color:#262626;transform:scaleX(0.9500);transform-origin:right;-webkit-text-stroke:0.1px #262626;">405.43</div>
<div class="t" style="right:412.00px;top:349.94px;font-size:9.80px;color:#262626;transform:scaleX(0.9500);transform-origin:right;-webkit-text-stroke:0.1px #262626;">31.62</div>
<div class="t" style="right:342.80px;top:349.94px;font-size:9.80px;color:#262626;transform:scaleX(0.9500);transform-origin:right;-webkit-text-stroke:0.1px #262626;">437.05</div>
<div class="t" style="left:836.00px;top:349.94px;font-size:9.80px;color:#262626;transform:scaleX(0.9022);transform-origin:left;-webkit-text-stroke:0.1px #262626;">PLN</div>
<div class="t" style="left:1002.80px;top:349.94px;font-size:9.80px;color:#262626;transform:scaleX(0.9319);transform-origin:left;-webkit-text-stroke:0.1px #262626;">10268</div>
<div style="position:absolute;left:0px;top:378.72px;width:1107px;height:1px;background:#dcdcdc;opacity:0.9"></div>
<div style="position:absolute;left:2.8px;top:366.72px;width:10.2px;height:10.2px;box-sizing:border-box;border:1px solid #c4c4c4;background:#fff;border-radius:1px"></div>
<div class="t" style="left:44.30px;top:367.72px;font-size:9.80px;color:#262626;transform:scaleX(0.9671);transform-origin:left;-webkit-text-stroke:0.1px #262626;">2023/PARD/D001/004746</div>
<div class="t" style="left:170.20px;top:367.72px;font-size:9.80px;color:#262626;transform:scaleX(0.8964);transform-origin:left;-webkit-text-stroke:0.1px #262626;">D001</div>
<div class="t" style="left:214.50px;top:367.72px;font-size:9.80px;color:#262626;transform:scaleX(0.8489);transform-origin:left;-webkit-text-stroke:0.1px #262626;">PARD</div>
<div class="t" style="left:256.90px;top:367.72px;font-size:9.80px;color:#262626;transform:scaleX(0.9255);transform-origin:left;-webkit-text-stroke:0.1px #262626;">2023-09-08</div>
<div class="t" style="left:327.90px;top:367.72px;font-size:9.80px;color:#262626;transform:scaleX(0.9255);transform-origin:left;-webkit-text-stroke:0.1px #262626;">2023-09-08</div>
<div class="t" style="left:390.00px;top:367.72px;font-size:9.80px;color:#262626;transform:scaleX(0.9457);transform-origin:left;-webkit-text-stroke:0.1px #262626;">Kontrahent tymczasowy</div>
<div class="t" style="left:515.90px;top:367.72px;font-size:9.80px;color:#262626;transform:scaleX(0.8815);transform-origin:left;-webkit-text-stroke:0.1px #262626;">TEMP</div>
<div class="t" style="right:462.60px;top:367.72px;font-size:9.80px;color:#262626;transform:scaleX(0.9500);transform-origin:right;-webkit-text-stroke:0.1px #262626;">64.83</div>
<div class="t" style="right:412.00px;top:367.72px;font-size:9.80px;color:#262626;transform:scaleX(0.9500);transform-origin:right;-webkit-text-stroke:0.1px #262626;">11.57</div>
<div class="t" style="right:342.80px;top:367.72px;font-size:9.80px;color:#262626;transform:scaleX(0.9500);transform-origin:right;-webkit-text-stroke:0.1px #262626;">76.40</div>
<div class="t" style="left:836.00px;top:367.72px;font-size:9.80px;color:#262626;transform:scaleX(0.9022);transform-origin:left;-webkit-text-stroke:0.1px #262626;">PLN</div>
<div class="t" style="left:1002.80px;top:367.72px;font-size:9.80px;color:#262626;transform:scaleX(0.9319);transform-origin:left;-webkit-text-stroke:0.1px #262626;">10268</div>
<div style="position:absolute;left:0px;top:396.50000000000006px;width:1107px;height:1px;background:#dcdcdc;opacity:0.9"></div>
<div style="position:absolute;left:2.8px;top:384.50000000000006px;width:10.2px;height:10.2px;box-sizing:border-box;border:1px solid #c4c4c4;background:#fff;border-radius:1px"></div>
<div class="t" style="left:44.30px;top:385.50px;font-size:9.80px;color:#262626;transform:scaleX(0.9671);transform-origin:left;-webkit-text-stroke:0.1px #262626;">2023/PARD/D001/004634</div>
<div class="t" style="left:170.20px;top:385.50px;font-size:9.80px;color:#262626;transform:scaleX(0.8964);transform-origin:left;-webkit-text-stroke:0.1px #262626;">D001</div>
<div class="t" style="left:214.50px;top:385.50px;font-size:9.80px;color:#262626;transform:scaleX(0.8489);transform-origin:left;-webkit-text-stroke:0.1px #262626;">PARD</div>
<div class="t" style="left:256.90px;top:385.50px;font-size:9.80px;color:#262626;transform:scaleX(0.9255);transform-origin:left;-webkit-text-stroke:0.1px #262626;">2023-09-08</div>
<div class="t" style="left:327.90px;top:385.50px;font-size:9.80px;color:#262626;transform:scaleX(0.9255);transform-origin:left;-webkit-text-stroke:0.1px #262626;">2023-09-08</div>
<div class="t" style="left:390.00px;top:385.50px;font-size:9.80px;color:#262626;transform:scaleX(0.9457);transform-origin:left;-webkit-text-stroke:0.1px #262626;">Kontrahent tymczasowy</div>
<div class="t" style="left:515.90px;top:385.50px;font-size:9.80px;color:#262626;transform:scaleX(0.8815);transform-origin:left;-webkit-text-stroke:0.1px #262626;">TEMP</div>
<div class="t" style="right:462.60px;top:385.50px;font-size:9.80px;color:#262626;transform:scaleX(0.9500);transform-origin:right;-webkit-text-stroke:0.1px #262626;">12.07</div>
<div class="t" style="right:412.00px;top:385.50px;font-size:9.80px;color:#262626;transform:scaleX(0.9500);transform-origin:right;-webkit-text-stroke:0.1px #262626;">2.77</div>
<div class="t" style="right:342.80px;top:385.50px;font-size:9.80px;color:#262626;transform:scaleX(0.9500);transform-origin:right;-webkit-text-stroke:0.1px #262626;">14.84</div>
<div class="t" style="left:836.00px;top:385.50px;font-size:9.80px;color:#262626;transform:scaleX(0.9022);transform-origin:left;-webkit-text-stroke:0.1px #262626;">PLN</div>
<div class="t" style="left:1002.80px;top:385.50px;font-size:9.80px;color:#262626;transform:scaleX(0.9319);transform-origin:left;-webkit-text-stroke:0.1px #262626;">10268</div>
<div style="position:absolute;left:0px;top:414.28000000000003px;width:1107px;height:1px;background:#dcdcdc;opacity:0.9"></div>
<div style="position:absolute;left:2.8px;top:402.28000000000003px;width:10.2px;height:10.2px;box-sizing:border-box;border:1px solid #c4c4c4;background:#fff;border-radius:1px"></div>
<div class="t" style="left:44.30px;top:403.28px;font-size:9.80px;color:#262626;transform:scaleX(0.9671);transform-origin:left;-webkit-text-stroke:0.1px #262626;">2023/PARD/D001/004195</div>
<div class="t" style="left:170.20px;top:403.28px;font-size:9.80px;color:#262626;transform:scaleX(0.8964);transform-origin:left;-webkit-text-stroke:0.1px #262626;">D001</div>
<div class="t" style="left:214.50px;top:403.28px;font-size:9.80px;color:#262626;transform:scaleX(0.8489);transform-origin:left;-webkit-text-stroke:0.1px #262626;">PARD</div>
<div class="t" style="left:256.90px;top:403.28px;font-size:9.80px;color:#262626;transform:scaleX(0.9255);transform-origin:left;-webkit-text-stroke:0.1px #262626;">2023-09-06</div>
<div class="t" style="left:327.90px;top:403.28px;font-size:9.80px;color:#262626;transform:scaleX(0.9255);transform-origin:left;-webkit-text-stroke:0.1px #262626;">2023-09-06</div>
<div class="t" style="left:390.00px;top:403.28px;font-size:9.80px;color:#262626;transform:scaleX(0.9457);transform-origin:left;-webkit-text-stroke:0.1px #262626;">Kontrahent tymczasowy</div>
<div class="t" style="left:515.90px;top:403.28px;font-size:9.80px;color:#262626;transform:scaleX(0.8815);transform-origin:left;-webkit-text-stroke:0.1px #262626;">TEMP</div>
<div class="t" style="right:462.60px;top:403.28px;font-size:9.80px;color:#262626;transform:scaleX(0.9500);transform-origin:right;-webkit-text-stroke:0.1px #262626;">20.40</div>
<div class="t" style="right:412.00px;top:403.28px;font-size:9.80px;color:#262626;transform:scaleX(0.9500);transform-origin:right;-webkit-text-stroke:0.1px #262626;">4.69</div>
<div class="t" style="right:342.80px;top:403.28px;font-size:9.80px;color:#262626;transform:scaleX(0.9500);transform-origin:right;-webkit-text-stroke:0.1px #262626;">25.09</div>
<div class="t" style="left:836.00px;top:403.28px;font-size:9.80px;color:#262626;transform:scaleX(0.9022);transform-origin:left;-webkit-text-stroke:0.1px #262626;">PLN</div>
<div class="t" style="left:1002.80px;top:403.28px;font-size:9.80px;color:#262626;transform:scaleX(0.9319);transform-origin:left;-webkit-text-stroke:0.1px #262626;">10268</div>
<div style="position:absolute;left:0px;top:432.06px;width:1107px;height:1px;background:#dcdcdc;opacity:0.9"></div>
<div style="position:absolute;left:2.8px;top:420.06px;width:10.2px;height:10.2px;box-sizing:border-box;border:1px solid #c4c4c4;background:#fff;border-radius:1px"></div>
<div class="t" style="left:44.30px;top:421.06px;font-size:9.80px;color:#262626;transform:scaleX(0.9671);transform-origin:left;-webkit-text-stroke:0.1px #262626;">2023/PARD/D001/003545</div>
<div class="t" style="left:170.20px;top:421.06px;font-size:9.80px;color:#262626;transform:scaleX(0.8964);transform-origin:left;-webkit-text-stroke:0.1px #262626;">D001</div>
<div class="t" style="left:214.50px;top:421.06px;font-size:9.80px;color:#262626;transform:scaleX(0.8489);transform-origin:left;-webkit-text-stroke:0.1px #262626;">PARD</div>
<div class="t" style="left:256.90px;top:421.06px;font-size:9.80px;color:#262626;transform:scaleX(0.9255);transform-origin:left;-webkit-text-stroke:0.1px #262626;">2023-09-01</div>
<div class="t" style="left:327.90px;top:421.06px;font-size:9.80px;color:#262626;transform:scaleX(0.9255);transform-origin:left;-webkit-text-stroke:0.1px #262626;">2023-09-01</div>
<div class="t" style="left:390.00px;top:421.06px;font-size:9.80px;color:#262626;transform:scaleX(0.9457);transform-origin:left;-webkit-text-stroke:0.1px #262626;">Kontrahent tymczasowy</div>
<div class="t" style="left:515.90px;top:421.06px;font-size:9.80px;color:#262626;transform:scaleX(0.8815);transform-origin:left;-webkit-text-stroke:0.1px #262626;">TEMP</div>
<div class="t" style="right:462.60px;top:421.06px;font-size:9.80px;color:#262626;transform:scaleX(0.9500);transform-origin:right;-webkit-text-stroke:0.1px #262626;">22.62</div>
<div class="t" style="right:412.00px;top:421.06px;font-size:9.80px;color:#262626;transform:scaleX(0.9500);transform-origin:right;-webkit-text-stroke:0.1px #262626;">1.13</div>
<div class="t" style="right:342.80px;top:421.06px;font-size:9.80px;color:#262626;transform:scaleX(0.9500);transform-origin:right;-webkit-text-stroke:0.1px #262626;">23.75</div>
<div class="t" style="left:836.00px;top:421.06px;font-size:9.80px;color:#262626;transform:scaleX(0.9022);transform-origin:left;-webkit-text-stroke:0.1px #262626;">PLN</div>
<div class="t" style="left:1002.80px;top:421.06px;font-size:9.80px;color:#262626;transform:scaleX(0.9319);transform-origin:left;-webkit-text-stroke:0.1px #262626;">10268</div>
<div style="position:absolute;left:0px;top:449.84000000000003px;width:1107px;height:1px;background:#dcdcdc;opacity:0.9"></div>
<div style="position:absolute;left:2.8px;top:437.84000000000003px;width:10.2px;height:10.2px;box-sizing:border-box;border:1px solid #c4c4c4;background:#fff;border-radius:1px"></div>
<div class="t" style="left:44.30px;top:438.84px;font-size:9.80px;color:#262626;transform:scaleX(0.9671);transform-origin:left;-webkit-text-stroke:0.1px #262626;">2023/PARD/D001/003414</div>
<div class="t" style="left:170.20px;top:438.84px;font-size:9.80px;color:#262626;transform:scaleX(0.8964);transform-origin:left;-webkit-text-stroke:0.1px #262626;">D001</div>
<div class="t" style="left:214.50px;top:438.84px;font-size:9.80px;color:#262626;transform:scaleX(0.8489);transform-origin:left;-webkit-text-stroke:0.1px #262626;">PARD</div>
<div class="t" style="left:256.90px;top:438.84px;font-size:9.80px;color:#262626;transform:scaleX(0.9255);transform-origin:left;-webkit-text-stroke:0.1px #262626;">2023-08-31</div>
<div class="t" style="left:327.90px;top:438.84px;font-size:9.80px;color:#262626;transform:scaleX(0.9255);transform-origin:left;-webkit-text-stroke:0.1px #262626;">2023-08-31</div>
<div class="t" style="left:390.00px;top:438.84px;font-size:9.80px;color:#262626;transform:scaleX(0.9457);transform-origin:left;-webkit-text-stroke:0.1px #262626;">Kontrahent tymczasowy</div>
<div class="t" style="left:515.90px;top:438.84px;font-size:9.80px;color:#262626;transform:scaleX(0.8815);transform-origin:left;-webkit-text-stroke:0.1px #262626;">TEMP</div>
<div class="t" style="right:462.60px;top:438.84px;font-size:9.80px;color:#262626;transform:scaleX(0.9500);transform-origin:right;-webkit-text-stroke:0.1px #262626;">37.07</div>
<div class="t" style="right:412.00px;top:438.84px;font-size:9.80px;color:#262626;transform:scaleX(0.9500);transform-origin:right;-webkit-text-stroke:0.1px #262626;">8.53</div>
<div class="t" style="right:342.80px;top:438.84px;font-size:9.80px;color:#262626;transform:scaleX(0.9500);transform-origin:right;-webkit-text-stroke:0.1px #262626;">45.60</div>
<div class="t" style="left:836.00px;top:438.84px;font-size:9.80px;color:#262626;transform:scaleX(0.9022);transform-origin:left;-webkit-text-stroke:0.1px #262626;">PLN</div>
<div class="t" style="left:1002.80px;top:438.84px;font-size:9.80px;color:#262626;transform:scaleX(0.9319);transform-origin:left;-webkit-text-stroke:0.1px #262626;">10268</div>
<div style="position:absolute;left:0px;top:467.62000000000006px;width:1107px;height:1px;background:#dcdcdc;opacity:0.9"></div>
<div style="position:absolute;left:2.8px;top:455.62000000000006px;width:10.2px;height:10.2px;box-sizing:border-box;border:1px solid #c4c4c4;background:#fff;border-radius:1px"></div>
<div class="t" style="left:44.30px;top:456.62px;font-size:9.80px;color:#262626;transform:scaleX(0.9671);transform-origin:left;-webkit-text-stroke:0.1px #262626;">2023/PARD/D001/002676</div>
<div class="t" style="left:170.20px;top:456.62px;font-size:9.80px;color:#262626;transform:scaleX(0.8964);transform-origin:left;-webkit-text-stroke:0.1px #262626;">D001</div>
<div class="t" style="left:214.50px;top:456.62px;font-size:9.80px;color:#262626;transform:scaleX(0.8489);transform-origin:left;-webkit-text-stroke:0.1px #262626;">PARD</div>
<div class="t" style="left:256.90px;top:456.62px;font-size:9.80px;color:#262626;transform:scaleX(0.9255);transform-origin:left;-webkit-text-stroke:0.1px #262626;">2023-08-21</div>
<div class="t" style="left:327.90px;top:456.62px;font-size:9.80px;color:#262626;transform:scaleX(0.9255);transform-origin:left;-webkit-text-stroke:0.1px #262626;">2023-08-21</div>
<div class="t" style="left:390.00px;top:456.62px;font-size:9.80px;color:#262626;transform:scaleX(0.9457);transform-origin:left;-webkit-text-stroke:0.1px #262626;">Kontrahent tymczasowy</div>
<div class="t" style="left:515.90px;top:456.62px;font-size:9.80px;color:#262626;transform:scaleX(0.8815);transform-origin:left;-webkit-text-stroke:0.1px #262626;">TEMP</div>
<div class="t" style="right:462.60px;top:456.62px;font-size:9.80px;color:#262626;transform:scaleX(0.9500);transform-origin:right;-webkit-text-stroke:0.1px #262626;">35.93</div>
<div class="t" style="right:412.00px;top:456.62px;font-size:9.80px;color:#262626;transform:scaleX(0.9500);transform-origin:right;-webkit-text-stroke:0.1px #262626;">8.26</div>
<div class="t" style="right:342.80px;top:456.62px;font-size:9.80px;color:#262626;transform:scaleX(0.9500);transform-origin:right;-webkit-text-stroke:0.1px #262626;">44.19</div>
<div class="t" style="left:836.00px;top:456.62px;font-size:9.80px;color:#262626;transform:scaleX(0.9022);transform-origin:left;-webkit-text-stroke:0.1px #262626;">PLN</div>
<div class="t" style="left:1002.80px;top:456.62px;font-size:9.80px;color:#262626;transform:scaleX(0.9319);transform-origin:left;-webkit-text-stroke:0.1px #262626;">10268</div>
<div style="position:absolute;left:19px;top:129.1px;width:1px;height:339.5200000000001px;background:#ececec"></div>
<div style="position:absolute;left:37px;top:113.6px;width:1px;height:354.5200000000001px;background:#ececec"></div>
<div style="position:absolute;left:699.2px;top:114.7px;width:68.1px;height:15.9px;box-sizing:border-box;border:1.2px solid #2f7d3e"></div>
<svg style="position:absolute;left:471.5px;top:487.5px;overflow:visible" width="12" height="12" viewBox="0 0 12 12" fill="none"><path d="M1 1 V11 L3.5 8.6 L5.4 12 L7 11.2 L5.3 8 H8.8 Z" fill="#fff" stroke="#444" stroke-width="0.9"/></svg>
</body></html>
